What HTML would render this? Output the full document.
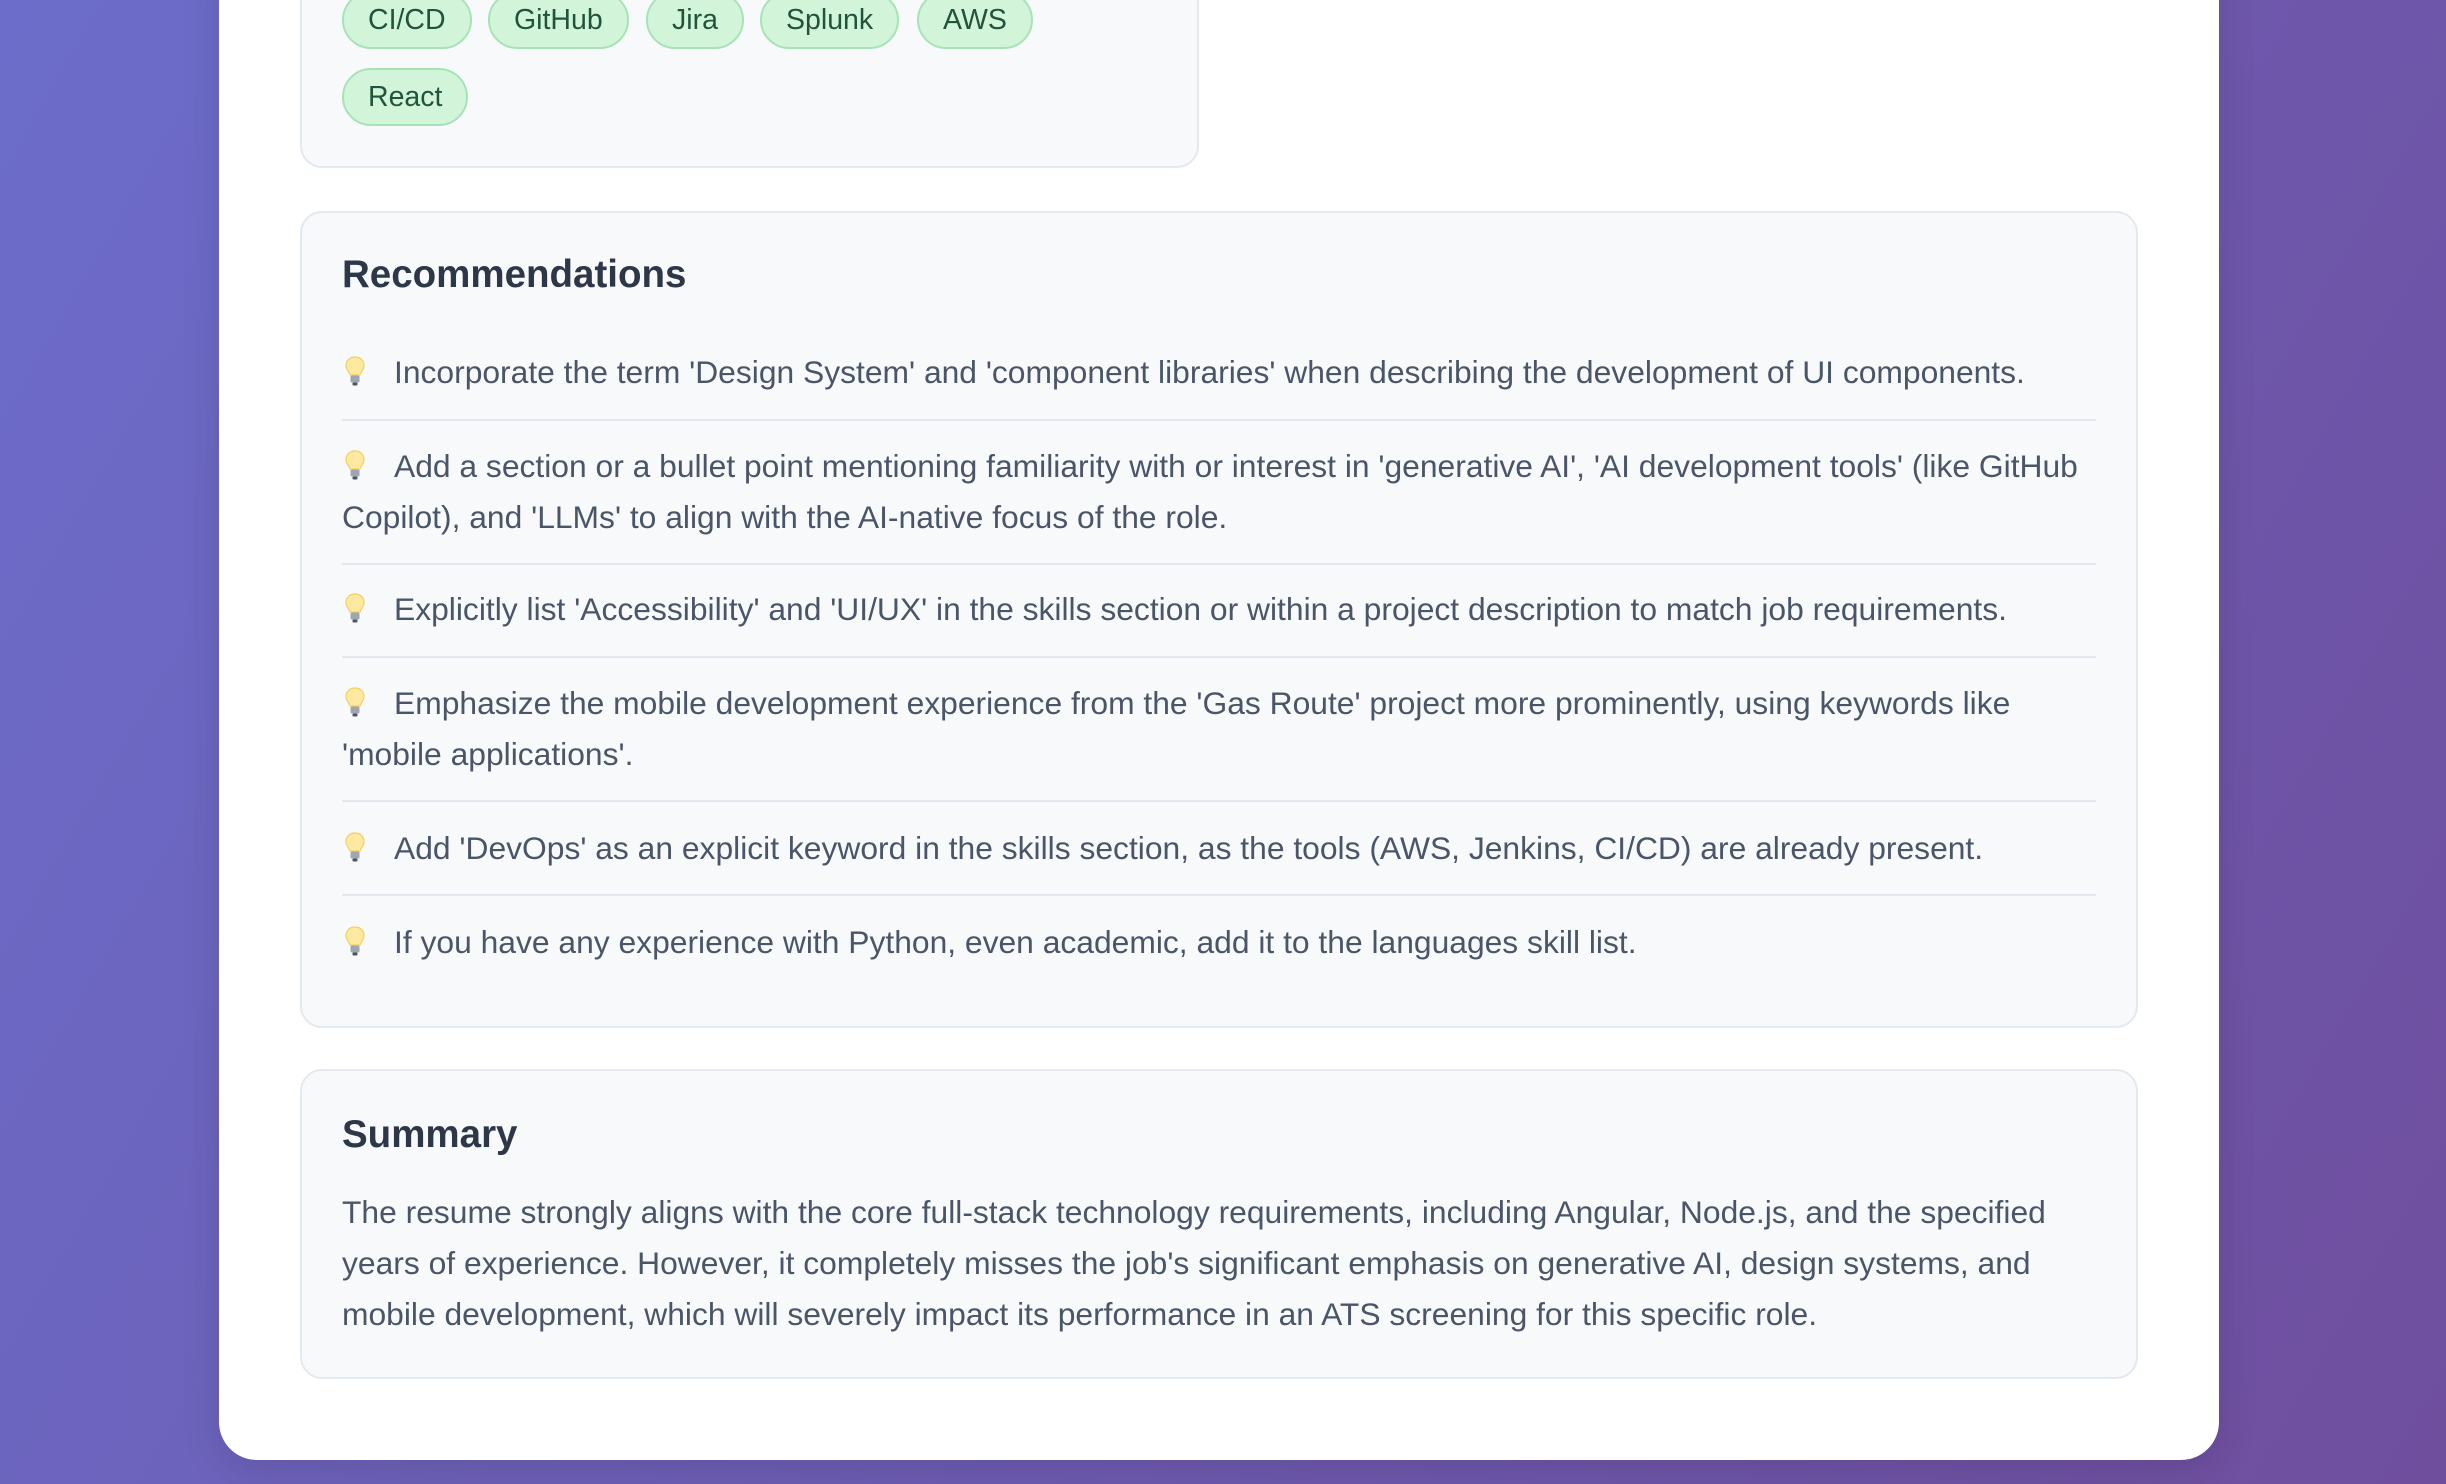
<!DOCTYPE html>
<html><head><meta charset="utf-8">
<style>
*{box-sizing:border-box;margin:0;padding:0}
html,body{width:2446px;height:1484px;overflow:hidden}
body{background:linear-gradient(120deg,#6c6dca 0%,#6d5db4 50%,#6f4e9e 100%);font-family:"Liberation Sans",Arial,sans-serif;position:relative}
.card{position:absolute;left:219px;top:-60px;width:2000px;height:1520px;background:#fff;border-radius:38px;box-shadow:0 10px 40px rgba(0,0,0,.12)}
.box{position:absolute;background:#f7f9fb;border:2px solid #e4e8ef;border-radius:22px}
.pill{position:absolute;height:58px;line-height:54px;padding:0 24px;background:#d2f5da;border:2px solid #a7e3b6;border-radius:29px;color:#22543d;font-size:28.5px}
h3{position:absolute;left:40px;font-size:38.5px;font-weight:bold;color:#2d3748}
.item{position:absolute;left:40px;width:1754px;font-size:31.8px;line-height:51px;color:#4a5568}
.div{position:absolute;left:40px;width:1754px;height:2px;background:#e2e8f0}
.bulb{display:inline-block;width:26px;height:34px;vertical-align:-6px;margin-right:26px}
.sum{position:absolute;left:40px;width:1760px;font-size:31.8px;line-height:51px;color:#4a5568}
</style></head><body>
<div class="card"></div>

<div class="box" style="left:300px;top:-40px;width:899px;height:208px">
  <div class="pill" style="left:40px;top:29px">CI/CD</div>
  <div class="pill" style="left:186px;top:29px">GitHub</div>
  <div class="pill" style="left:344px;top:29px">Jira</div>
  <div class="pill" style="left:458px;top:29px">Splunk</div>
  <div class="pill" style="left:615px;top:29px">AWS</div>
  <div class="pill" style="left:40px;top:106px">React</div>
</div>

<svg width="0" height="0" style="position:absolute"><defs>
<symbol id="b" viewBox="0 0 26 34"><path d="M13 2C7.5 2 4 6 4 10.5c0 4 3 6 4 9.5h10c1-3.5 4-5.5 4-9.5C22 6 18.5 2 13 2z" fill="#fde9a0" stroke="#f5cf60" stroke-width="1.2"/><rect x="8.5" y="20.5" width="9" height="7" rx="1.5" fill="#a0a6b0"/><rect x="10.5" y="27.5" width="5" height="3" rx="1" fill="#4b5563"/></symbol>
</defs></svg>

<div class="box" style="left:300px;top:211px;width:1838px;height:817px">
  <h3 style="top:40px">Recommendations</h3>
  <div class="item" style="top:134px"><svg class="bulb"><use href="#b"/></svg>Incorporate the term 'Design System' and 'component libraries' when describing the development of UI components.</div>
  <div class="div" style="top:206px"></div>
  <div class="item" style="top:228px"><svg class="bulb"><use href="#b"/></svg>Add a section or a bullet point mentioning familiarity with or interest in 'generative AI', 'AI development tools' (like GitHub Copilot), and 'LLMs' to align with the AI-native focus of the role.</div>
  <div class="div" style="top:350px"></div>
  <div class="item" style="top:371px"><svg class="bulb"><use href="#b"/></svg>Explicitly list 'Accessibility' and 'UI/UX' in the skills section or within a project description to match job requirements.</div>
  <div class="div" style="top:443px"></div>
  <div class="item" style="top:465px"><svg class="bulb"><use href="#b"/></svg>Emphasize the mobile development experience from the 'Gas Route' project more prominently, using keywords like 'mobile applications'.</div>
  <div class="div" style="top:587px"></div>
  <div class="item" style="top:610px"><svg class="bulb"><use href="#b"/></svg>Add 'DevOps' as an explicit keyword in the skills section, as the tools (AWS, Jenkins, CI/CD) are already present.</div>
  <div class="div" style="top:681px"></div>
  <div class="item" style="top:704px"><svg class="bulb"><use href="#b"/></svg>If you have any experience with Python, even academic, add it to the languages skill list.</div>
</div>

<div class="box" style="left:300px;top:1069px;width:1838px;height:310px">
  <h3 style="top:42px">Summary</h3>
  <div class="sum" style="top:116px">The resume strongly aligns with the core full-stack technology requirements, including Angular, Node.js, and the specified years of experience. However, it completely misses the job's significant emphasis on generative AI, design systems, and mobile development, which will severely impact its performance in an ATS screening for this specific role.</div>
</div>
</body></html>
